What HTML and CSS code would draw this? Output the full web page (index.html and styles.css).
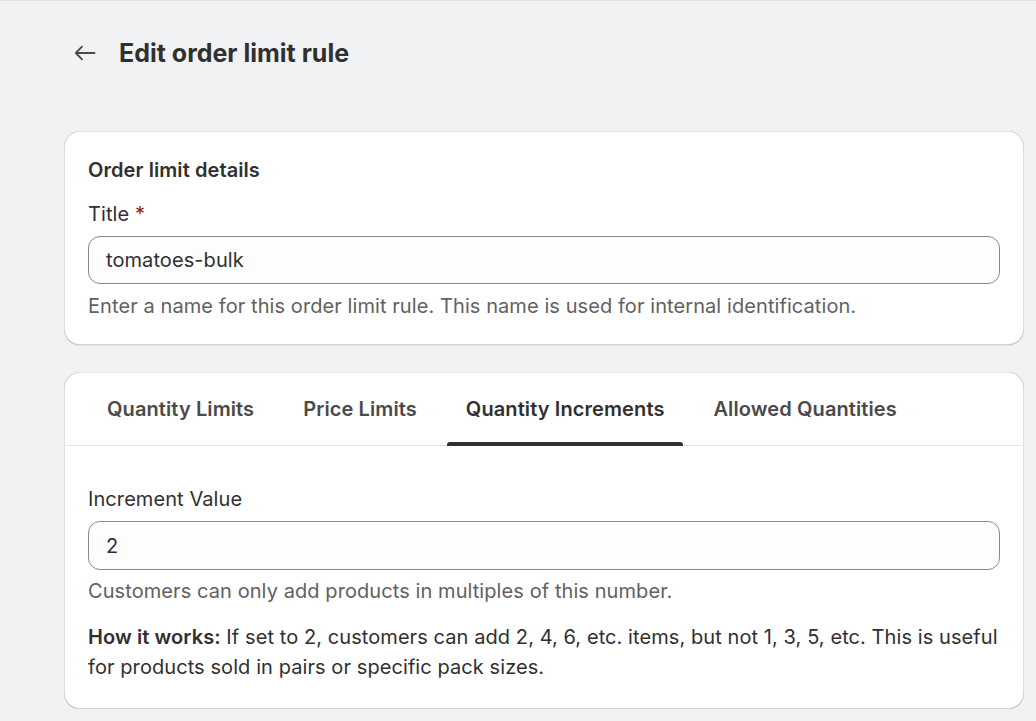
FILE: index.html
```html
<!DOCTYPE html>
<html lang="en">
<head>
<meta charset="utf-8">
<title>Edit order limit rule</title>
<link rel="stylesheet" href="styles.css">
</head>
<body>
<div class="page">
  <header class="header">
    <button class="back" aria-label="Back">
      <svg width="22" height="22" viewBox="0 0 22 22" fill="none" stroke="#4a4a4a" stroke-width="1.8" stroke-linecap="round" stroke-linejoin="round"><path d="M20.5 11H1.8M8 4.7L1.8 11 8 17.3"/></svg>
    </button>
    <h1 class="title">Edit order limit rule</h1>
  </header>

  <section class="card card-details">
    <h2 class="card-heading">Order limit details</h2>
    <label class="label" for="title">Title <span class="req">*</span></label>
    <div class="input"><span>tomatoes-bulk</span></div>
    <p class="help">Enter a name for this order limit rule. This name is used for internal identification.</p>
  </section>

  <section class="card card-tabs">
    <nav class="tabs">
      <button class="tab">Quantity Limits</button>
      <button class="tab">Price Limits</button>
      <button class="tab active">Quantity Increments</button>
      <button class="tab">Allowed Quantities</button>
    </nav>
    <div class="tab-body">
      <label class="label">Increment Value</label>
      <div class="input"><span>2</span></div>
      <p class="help">Customers can only add products in multiples of this number.</p>
      <p class="note"><strong>How it works:</strong> If set to 2, customers can add 2, 4, 6, etc. items, but not 1, 3, 5, etc. This is useful for products sold in pairs or specific pack sizes.</p>
    </div>
  </section>
</div>
</body>
</html>
```

FILE: styles.css
```css
* { box-sizing: border-box; }
html, body { margin: 0; padding: 0; }
body {
  background: #f1f2f4;
  font-family: Inter, "Noto Sans", sans-serif;
  color: #303030;
  font-size: 20px;
  line-height: 30px;
  letter-spacing: 0.08px;
  border-top: 1px solid #e3e3e3;
}
.page {
  padding: 0 12px 0 64px;
  display: flex;
  flex-direction: column;
}
.header {
  display: flex;
  align-items: center;
  gap: 23px;
  height: 106px;
  padding-bottom: 3px;
  margin-left: 10px;
}
.back {
  border: 0;
  background: none;
  padding: 0;
  width: 22px;
  height: 22px;
  display: flex;
}
.title {
  margin: 0;
  font-size: 25px;
  font-weight: 700;
  letter-spacing: 0;
  color: #303030;
  line-height: 32px;
}
.card {
  background: #fff;
  border-radius: 16px;
  box-shadow: inset 1px 0 0 rgba(0,0,0,0.13), inset -1px 0 0 rgba(0,0,0,0.13), inset 0 -1px 0 rgba(0,0,0,0.17), inset 0 1px 0 rgba(204,204,204,0.5), 0 1px 0 rgba(26,26,26,0.07);
}
.card-details {
  margin-top: 24px;
  padding: 24px;
  display: flex;
  flex-direction: column;
}
.card-heading {
  margin: 0 0 14px;
  font-size: 20px;
  font-weight: 600;
  line-height: 30px;
}
.label {
  display: block;
  line-height: 30px;
}
.req { color: #8e1f0b; }
.input {
  margin-top: 7px;
  height: 48px;
  border: 1px solid #8a8a8a;
  border-radius: 12px;
  background: #fdfdfd;
  padding: 0 17px;
  display: flex;
  align-items: center;
  color: #303030;
}
.help {
  margin: 7px 0 0;
  color: #616161;
}
.card-tabs {
  margin-top: 27px;
  display: flex;
  flex-direction: column;
}
.tabs {
  display: flex;
  gap: 11px;
  padding: 0 24px;
  border-bottom: 1px solid #e3e3e3;
}
.tab {
  font: inherit;
  font-weight: 600;
  letter-spacing: 0.1px;
  color: #4a4a4a;
  background: none;
  border: 0;
  padding: 0 19px;
  height: 73px;
  position: relative;
}
.tab.active { color: #303030; }
.tab.active::after {
  content: "";
  position: absolute;
  left: 0;
  right: 0;
  bottom: -1px;
  height: 4px;
  background: #303030;
  border-radius: 3px 3px 0 0;
}
.tab-body {
  padding: 38px 24px 27px;
  display: flex;
  flex-direction: column;
}
.tab-body .input { margin-top: 7px; height: 49px; }
.tab-body .help { margin-top: 6px; }
.note {
  margin: 16px 0 0;
  color: #303030;
}
.note strong { font-weight: 600; }
```
